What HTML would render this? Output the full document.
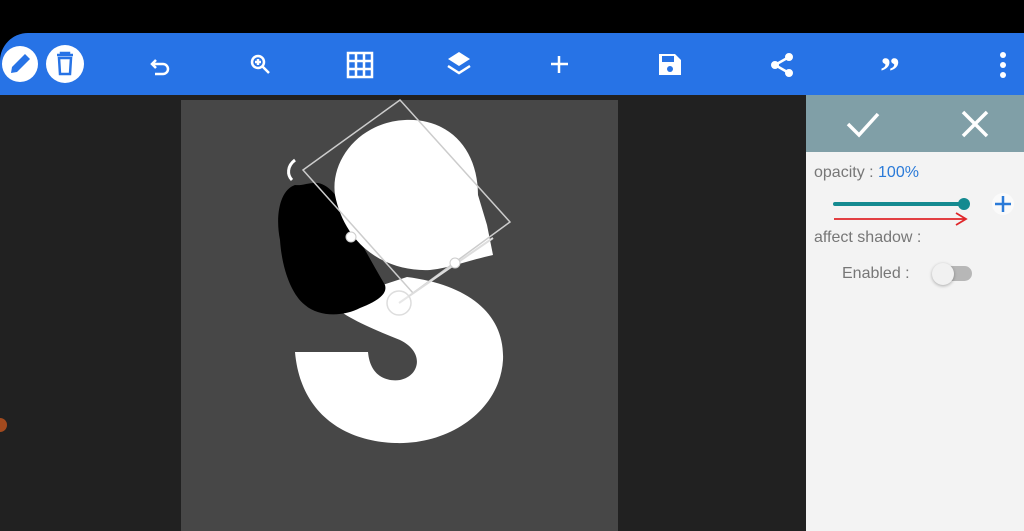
<!DOCTYPE html>
<html><head><meta charset="utf-8"><style>
body{margin:0;width:1024px;height:531px;overflow:hidden;background:#000;font-family:"Liberation Sans",sans-serif;position:relative}
.tb{position:absolute;left:0;top:33px;width:1024px;height:62px;background:#2773e6;border-top-left-radius:28px}
.ic{position:absolute}
.dark{position:absolute;left:0;top:95px;width:806px;height:436px;background:#212121}
.cv{position:absolute;left:181px;top:100px;width:437px;height:431px;background:#474747}
.ph{position:absolute;left:806px;top:95px;width:218px;height:57px;background:#809fa7}
.pb{position:absolute;left:806px;top:152px;width:218px;height:379px;background:#f3f3f3}
.t{position:absolute;color:#777;font-size:16px}
</style></head><body>
<div class="tb"></div>
<svg class="ic" style="left:0;top:33px" width="1024" height="62" viewBox="0 0 1024 62" fill="none" stroke="#fff">
<circle cx="20" cy="31" r="18" fill="#fff" stroke="none"/>
<path d="M11 40 L12 34 L25 21 L30 26 L17 39 Z" fill="#2773e6" stroke="none"/>
<circle cx="65" cy="31" r="19" fill="#fff" stroke="none"/>
<path d="M57 22h16M61 22v-2h8v2M59 25h12l-1 16h-10z" fill="none" stroke="#2773e6" stroke-width="2.5"/>
<path d="M153 31h10a5 5 0 0 1 0 10h-8M156 27l-4 4 4 4" stroke-width="2.5"/>
<circle cx="258" cy="29" r="6" stroke-width="2.5"/><path d="M262 33l7 7M255 29h6M258 26v6" stroke-width="2.5"/>
<path d="M348 20h24v24h-24zM348 28h24M348 36h24M356 20v24M364 20v24" stroke-width="2.5"/>
<path d="M459 19l-11 7 11 7 11-7z" fill="#fff" stroke="none"/><path d="M448 33l11 7 11-7" stroke-width="2.5"/>
<path d="M559 23v17M551 31h17" stroke-width="2.5"/>
<path d="M659 21h16l6 6v15h-22z" fill="#fff" stroke="none"/><rect x="662" y="23" width="12" height="6" fill="#2773e6" stroke="none"/><circle cx="670" cy="36" r="3" fill="#2773e6" stroke="none"/>
<circle cx="789" cy="24" r="3.5" fill="#fff"/><circle cx="775" cy="32" r="3.5" fill="#fff"/><circle cx="789" cy="40" r="3.5" fill="#fff"/><path d="M789 24l-14 8 14 8" stroke-width="2.5"/>
<text x="880" y="52" fill="#fff" stroke="none" font-size="40" font-weight="bold" font-family="Liberation Serif">”</text>
<circle cx="1003" cy="22" r="3" fill="#fff" stroke="none"/><circle cx="1003" cy="32" r="3" fill="#fff" stroke="none"/><circle cx="1003" cy="42" r="3" fill="#fff" stroke="none"/>
</svg>
<div class="dark"></div>
<div class="cv"></div>
<svg class="ic" style="left:0;top:0" width="806" height="531">
<circle cx="0" cy="425" r="7" fill="#a24a1e"/>
<path d="M407 277 C470 285 505 315 503 360 C500 410 450 445 395 443 C340 441 300 410 295 352 L368 352 C370 375 385 382 400 380 C420 376 425 352 400 340 C370 328 340 315 330 302 Z" fill="#fff"/>
<path d="M295 185 C280 190 275 215 280 240 C282 270 292 295 305 305 C320 318 345 316 360 308 C375 302 388 295 385 285 C375 268 362 245 352 225 C342 200 330 185 318 183 C310 182 302 186 295 185 Z" fill="#000"/>
<path d="M335 195 C330 160 360 122 405 120 C450 118 478 150 478 195 L487 225 L493 255 C470 260 450 268 430 270 C385 272 345 245 335 195 Z" fill="#fff"/>
<path d="M295 160 C287 166 287 175 292 180" stroke="#fff" stroke-width="3" fill="none"/>
<path d="M400 100 L510 222 L413 293 L303 170 Z" stroke="#ccc" stroke-width="1.5" fill="none"/>
<path d="M399 303 L493 238" stroke="#ddd" stroke-width="2"/>
<circle cx="399" cy="303" r="12" fill="#fff" fill-opacity=".3" stroke="#ddd" stroke-width="1.5"/>
<circle cx="351" cy="237" r="5" fill="#fff" stroke="#ccc"/>
<circle cx="455" cy="263" r="5" fill="#fff" stroke="#ccc"/>
</svg>
<div class="ph"></div>
<svg class="ic" style="left:806px;top:95px" width="218" height="57" fill="none" stroke="#fff" stroke-width="3.5">
<path d="M42 29l11 11 19-21"/><path d="M157 17l24 24M181 17l-24 24"/>
</svg>
<div class="pb"></div>
<div class="t" style="left:814px;top:164px">opacity : <span style="color:#2a7ad8">100%</span></div>
<svg class="ic" style="left:806px;top:190px" width="218" height="40">
<path d="M29 14H158" stroke="#148a90" stroke-width="4" stroke-linecap="round"/>
<circle cx="158" cy="14" r="6" fill="#148a90"/>
<circle cx="197" cy="14" r="11" fill="#fafafa"/>
<path d="M197 6v16M189 14h16" stroke="#2a7ad8" stroke-width="2.5"/>
<path d="M28 29H160M150 23l10 6-10 6" stroke="#e0262a" stroke-width="1.8" fill="none"/>
</svg>
<div class="t" style="left:814px;top:229px">affect shadow :</div>
<div class="t" style="left:842px;top:265px">Enabled :</div>
<div style="position:absolute;left:937px;top:266px;width:35px;height:15px;border-radius:8px;background:#b7b7b7"></div>
<div style="position:absolute;left:932px;top:263px;width:22px;height:22px;border-radius:50%;background:#f1f1f1;box-shadow:0 1px 3px rgba(0,0,0,.3)"></div>
</body></html>
